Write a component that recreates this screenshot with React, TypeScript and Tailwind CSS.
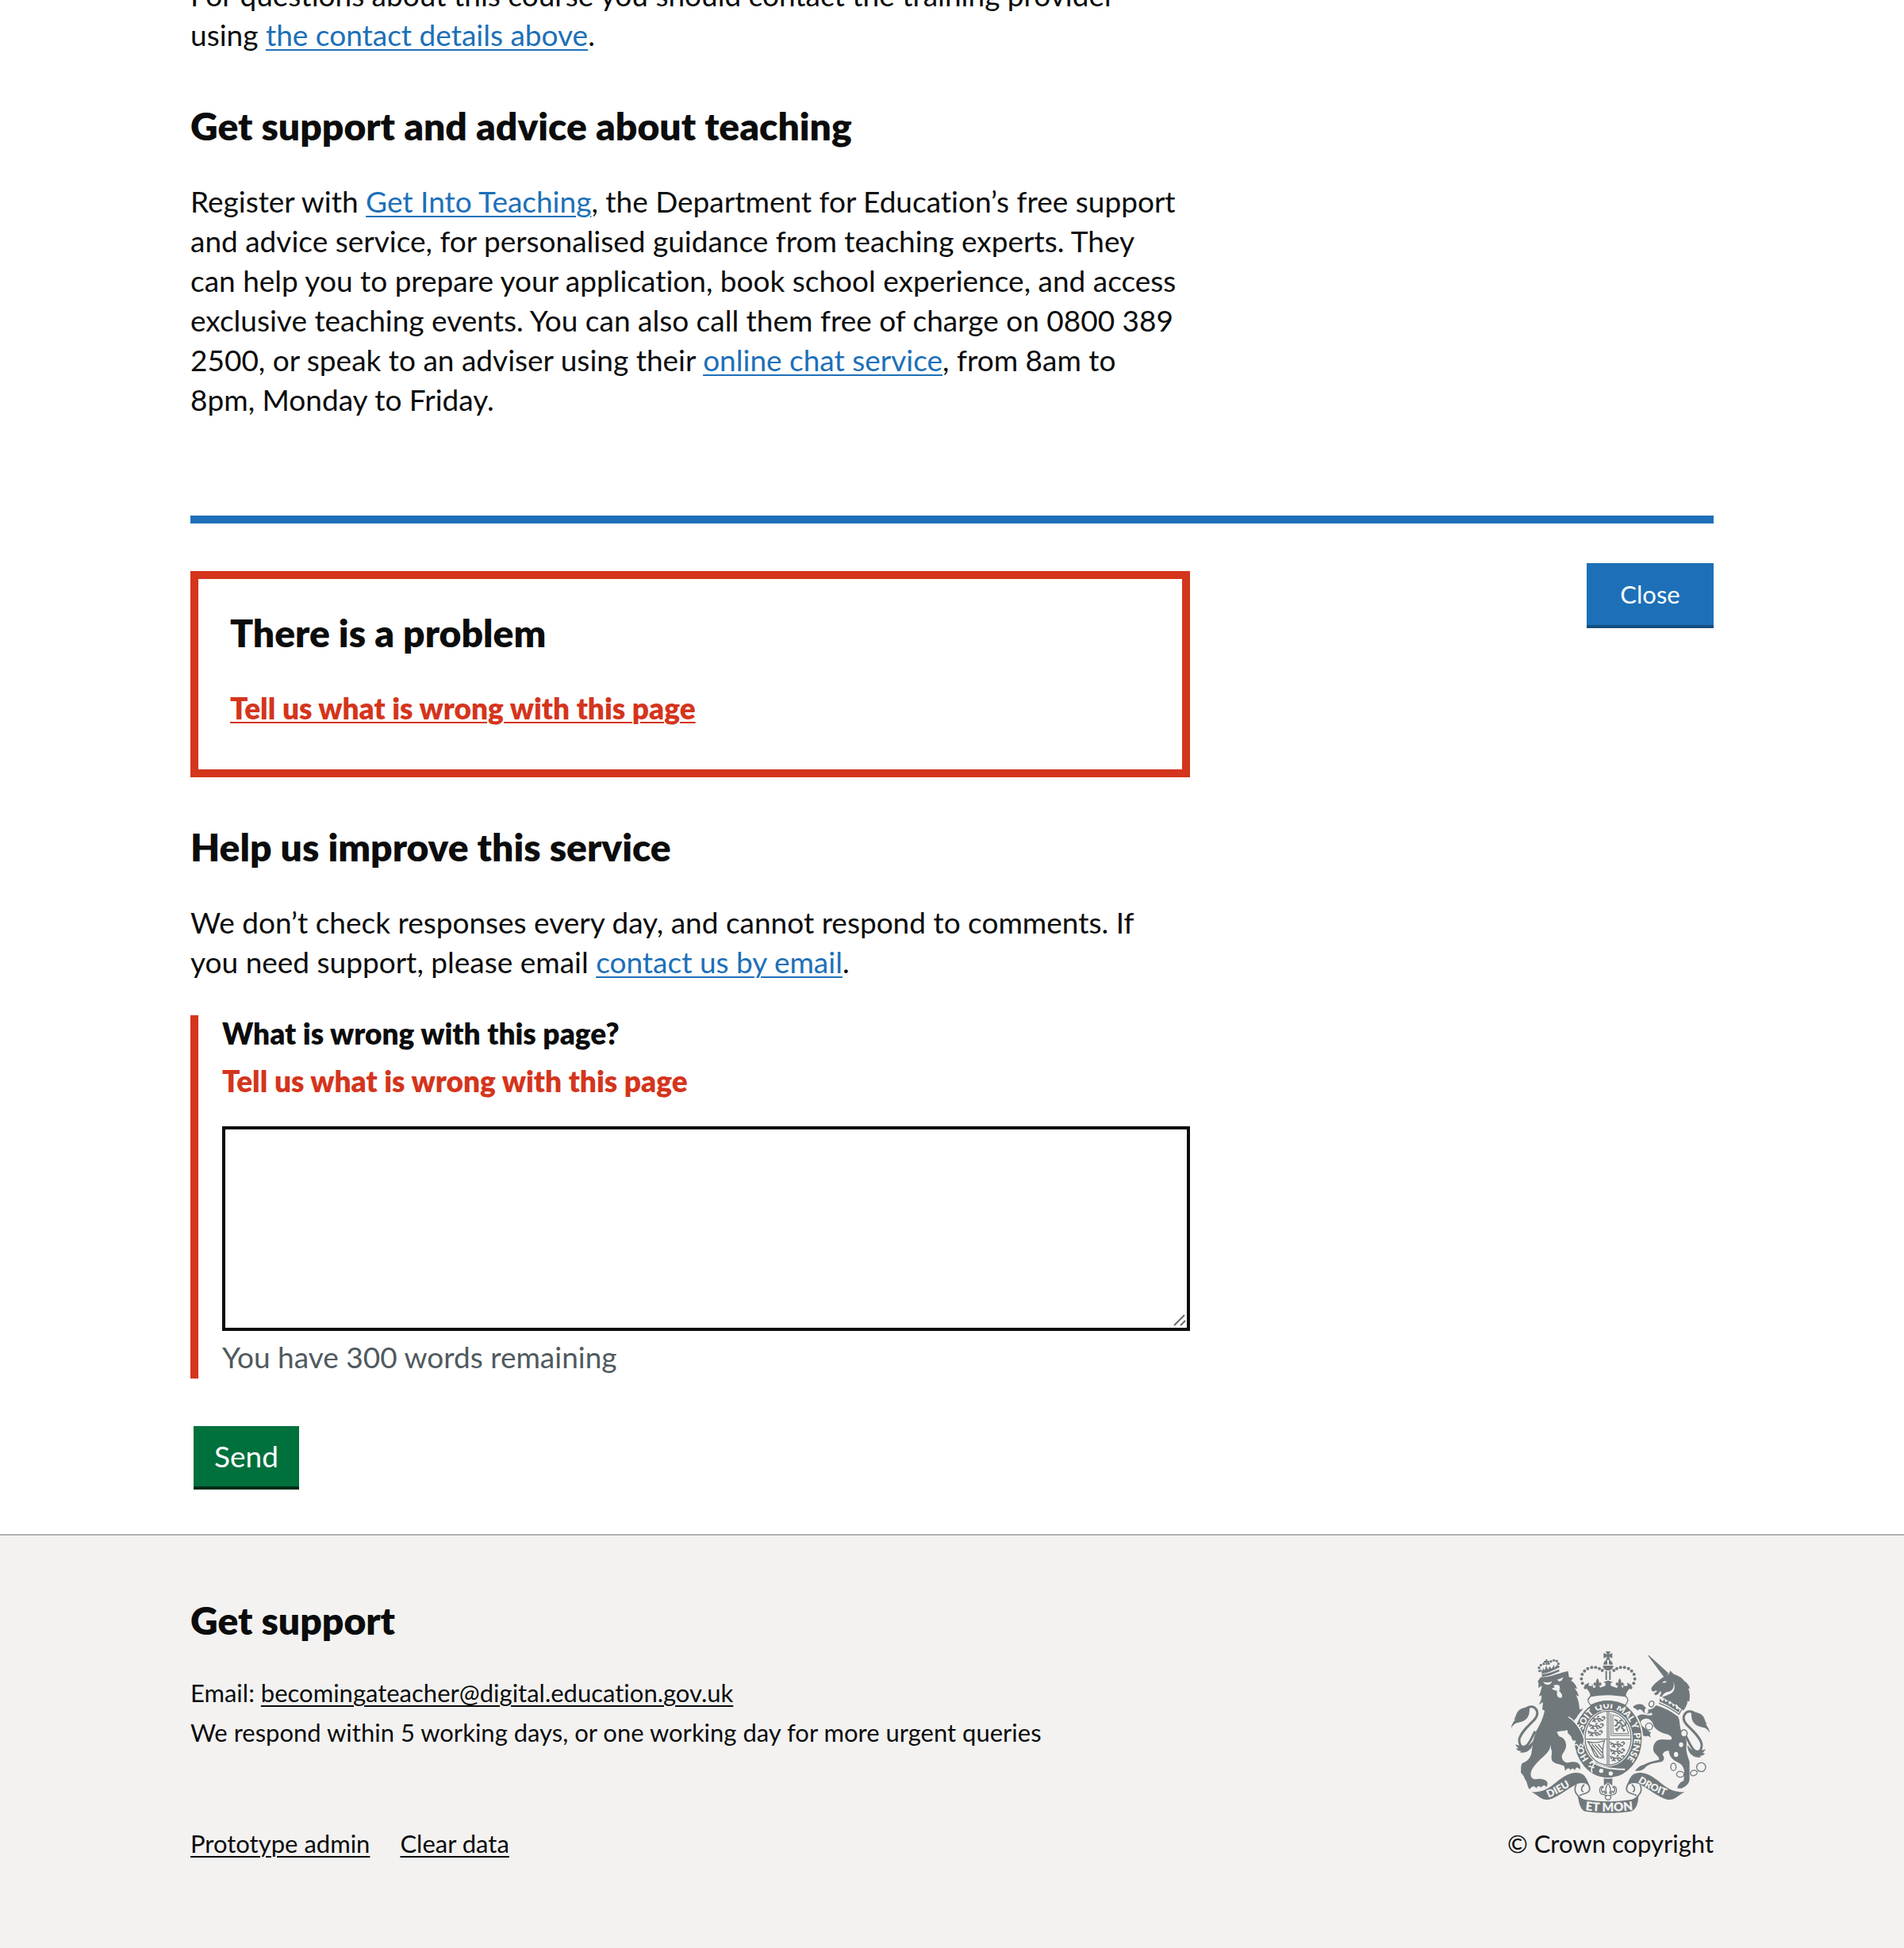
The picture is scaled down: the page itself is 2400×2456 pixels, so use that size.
import type { ReactNode } from "react";

const INK = "#70787b";
const PAPER = "#f3f2f1";

function Link({ href, children }: { href: string; children: ReactNode }) {
  return (
    <a href={href} className="text-[#1d70b8] underline decoration-2 underline-offset-[4px]">
      {children}
    </a>
  );
}

function FooterLink({ href, children }: { href: string; children: ReactNode }) {
  return (
    <a href={href} className="underline decoration-2 underline-offset-[4px]">
      {children}
    </a>
  );
}

function Heading({ children }: { children: ReactNode }) {
  return <h2 className="text-[48px] leading-[60px] font-extrabold">{children}</h2>;
}

function Dots({ points, r }: { points: number[][]; r: number }) {
  return (
    <>
      {points.map(([x, y]) => (
        <circle key={`${x}-${y}`} cx={x} cy={y} r={r} />
      ))}
    </>
  );
}

/* One side of the motto ribbon, with its fold; the other side mirrors it. */
function RibbonSide() {
  return (
    <g>
      <path d="M149 598 C178 600 200 592 222 577 C248 558 272 532 308 526 C336 522 352 534 358 554 L364 574 C352 562 338 562 322 567 C300 577 262 606 232 620 C214 629 196 629 184 621 C172 613 160 604 149 598Z" />
      <path
        d="M354 548 C362 570 374 582 366 594 C358 606 340 604 330 612 M318 568 C308 586 312 600 324 612 C330 620 330 634 336 646 M348 570 C336 580 334 590 344 598"
        fill="none"
        stroke={INK}
        strokeWidth="5"
      />
    </g>
  );
}

function Tail() {
  return (
    <g>
      <path d="M72 356 C73 334 94 322 82 322 C90 316 88 304 98 292 C108 280 128 276 142 280 C140 290 142 306 132 318 C122 332 104 334 92 337 C84 340 78 346 72 356Z" />
      <path
        d="M112 296 C124 280 146 270 160 279 C176 292 172 312 158 326 C136 348 106 374 102 400 C102 424 112 432 128 424 C142 414 148 394 162 368"
        fill="none"
        stroke={INK}
        strokeWidth="9"
      />
      <path d="M87 418 C98 424 112 420 122 426 C136 426 148 414 156 402 C156 424 144 442 124 448 C116 450 110 450 104 448 L110 442 C102 444 94 440 90 434 L100 432 C94 430 90 424 87 418Z" />
    </g>
  );
}

function FleurDeLis({ x, y }: { x: number; y: number }) {
  return (
    <path
      transform={`translate(${x} ${y})`}
      d="M0 -20 C5 -12 8 -6 4 2 C6 -4 14 -6 15 2 C16 8 10 10 7 7 C7 12 10 16 14 22 L-14 22 C-10 16 -7 12 -7 7 C-10 10 -16 8 -15 2 C-14 -6 -6 -4 -4 2 C-8 -6 -5 -12 0 -20Z"
    />
  );
}

function PassantLion({ x, y }: { x: number; y: number }) {
  return (
    <path
      transform={`translate(${x} ${y})`}
      d="M0 6 l6 -6 l6 3 l10 1 l9 -2 l8 3 M4 14 l6 -4 l2 -6 M14 5 l-2 7 l6 3 M26 4 l2 7 l7 3 M34 4 l6 6 l7 -2 M40 -2 l7 -3 l5 4 l-4 6 M2 0 l-4 -5 M22 -2 l8 -6"
      fill="none"
      stroke={INK}
      strokeWidth="5"
    />
  );
}

function Crest() {
  const arch = [[352, 203], [341, 187], [337, 170], [340, 153], [349, 140], [361, 131], [376, 127], [391, 127], [405, 131], [416, 138]];
  return (
    <svg viewBox="72 66 750 612" className="h-[204px] w-[250px]" fill={INK} role="img" aria-label="Royal coat of arms">
      {/* lion */}
      <Tail />
      <path d="M172 179 L184 163 C206 166 232 156 250 151 C264 146 276 142 287 141 L290 163 L306 167 L298 177 C308 182 316 192 321 207 L312 206 C318 214 326 224 327 236 L317 232 C324 246 329 262 330 286 L344 283 C334 296 324 306 318 318 C312 322 304 336 308 348 L330 368 C338 382 346 398 344 408 L340 424 L334 414 L328 428 L321 416 L312 420 L316 406 L308 404 L300 396 L306 388 L294 388 L299 372 L288 378 L283 363 C274 368 258 366 243 371 C250 376 246 386 262 391 C274 398 280 410 279 424 C279 440 264 452 263 464 C264 478 276 490 290 486 C306 482 322 484 328 492 C334 498 334 506 332 514 C326 504 318 504 316 508 L312 517 C308 506 300 508 296 516 C292 506 284 506 276 518 L272 500 C258 492 240 494 226 480 C220 462 230 448 222 434 L219 410 C224 436 206 454 186 470 C168 488 150 506 146 524 C144 540 150 548 162 550 C178 546 200 548 208 560 C210 568 208 576 204 580 C200 570 192 570 184 582 C180 574 172 574 166 584 C160 574 150 574 142 588 C132 580 134 566 128 556 C120 546 122 540 116 534 L108 524 C110 512 106 498 114 488 C132 484 144 468 148 452 C154 420 152 400 168 364 C182 340 192 320 198 290 L189 286 L192 258 L176 268 C184 254 188 244 186 232 L176 236 C184 218 186 206 188 196 L174 204 C176 192 176 186 172 179Z" />
      <g fill={PAPER}>
        <path d="M192 180 Q206 188 226 179 Q220 194 206 192 Q196 190 192 180Z" />
        <path d="M246 171 Q256 174 268 163 Q266 178 254 180 Q248 178 246 171Z" />
        <path d="M224 208 L236 202 L232 194 L246 192 L254 196 L256 206 L248 210 L258 208 L252 216 C264 224 270 240 258 242 C246 242 242 228 246 216 L234 212Z" />
      </g>
      <g>
        <path d="M186 152 Q216 150 252 134 L254 142 Q222 158 190 163Z" />
        <path d="M182 132 L190 140 L192 128 L198 138 L204 120 L211 136 L217 122 L224 132 L234 116 L235 128 L246 116 L250 128 Q218 146 188 150Z" />
        <Dots r={5} points={[[179, 140], [177, 128], [184, 118], [195, 113], [213, 112], [222, 104], [233, 100], [244, 103], [250, 113], [249, 124]]} />
        <path d="M202 96 h6 v6 h7 v6 h-7 v10 h-6 v-10 h-7 v-6 h7Z" />
      </g>

      {/* unicorn */}
      <g transform="translate(894 18) scale(-1 1)">
        <Tail />
      </g>
      <path d="M588 81 L593 82 L668 150 L650 164Z" />
      <path d="M648 163 L668 152 L673 139 L686 152 C704 158 722 168 726 178 C736 184 744 194 748 208 L741 206 C748 220 748 238 745 256 L738 254 C738 268 730 280 722 290 L712 282 L704 276 L698 268 L686 266 L674 256 L662 252 L650 244 L640 238 L632 236 C640 226 640 222 636 216 C630 226 624 232 616 232 L612 226 L624 216 L618 214 L612 218 C604 218 600 212 602 204 C610 192 618 184 632 174Z" />
      <path d="M684 180 C692 202 680 218 662 220 C650 222 646 232 638 240 C652 238 664 230 674 226 C690 218 694 198 684 180Z" fill={PAPER} />
      <path d="M642 184 Q650 176 660 180 Q654 188 642 184Z" fill={PAPER} />
      {/* coronet collar */}
      <path d="M634 236 L722 290 L712 312 L622 264Z" fill={PAPER} />
      <path d="M630 262 Q668 276 706 304 L716 286" fill="none" stroke={INK} strokeWidth="4" />
      <path d="M632 256 L634 244 L644 256 L650 246 L656 258 L666 252 L668 268 L678 262 L684 276 L692 268 L696 284 L708 284 L706 298 Q668 270 632 256Z" />
      <path d="M620 270 Q662 282 702 312 C712 330 706 348 716 370 C730 386 738 404 734 426 C732 446 740 464 746 484 L746 552 C742 572 728 578 716 584 L700 584 C702 570 712 560 724 556 L726 520 C724 496 708 488 694 482 C676 472 668 456 668 442 C656 442 648 446 644 456 C650 466 654 476 640 484 C618 488 596 490 580 504 C572 514 560 520 540 518 C548 506 558 498 574 494 C592 484 614 480 630 476 C634 468 620 458 612 448 C604 430 612 410 626 402 C644 396 660 402 676 400 C684 394 676 386 664 380 C642 376 622 366 610 348 C608 336 602 328 592 322 C580 318 570 322 562 330 C560 342 568 350 582 360 L600 374 L596 380 L600 392 C588 384 586 384 582 388 C570 386 560 376 552 362 C544 346 536 338 538 326 C548 308 560 302 578 306 C590 308 600 310 606 306 L602 298 C590 304 576 304 568 292 C562 284 556 282 550 290 C544 282 536 282 532 276 C540 266 560 262 572 270 C580 278 584 286 594 286 C604 286 612 278 620 270Z" />
      <g fill={PAPER} stroke={INK} strokeWidth="4">
        <ellipse cx="602" cy="265" rx="9" ry="11" transform="rotate(20 602 265)" />
        <ellipse cx="583" cy="291" rx="7" ry="10" stroke="none" />
        <ellipse cx="593" cy="350" rx="13" ry="13" />
        <ellipse cx="725" cy="376" rx="12" ry="13" />
        <ellipse cx="714" cy="419" rx="8" ry="9" stroke="none" />
        <ellipse cx="695" cy="456" rx="8" ry="10" stroke="none" />
        <ellipse cx="685" cy="503" rx="10" ry="14" />
        <ellipse cx="711" cy="531" rx="14" ry="11" />
        <ellipse cx="762" cy="526" rx="13" ry="10" transform="rotate(-20 762 526)" />
        <circle cx="790" cy="504" r="17" />
      </g>

      {/* garter */}
      <ellipse cx="438" cy="397" rx="130" ry="149" fill={INK} stroke={PAPER} strokeWidth="5" />
      <ellipse cx="438" cy="394" rx="93" ry="107" fill={PAPER} />
      <ellipse cx="438" cy="394" rx="87" ry="102" fill={PAPER} stroke={INK} strokeWidth="4" />
      <defs>
        <path id="garter" d="M438 510 A98 114 0 0 1 438 282 A98 114 0 0 1 438 510" />
        <path id="dieu" d="M213 620 Q262 599 320 560" />
        <path id="droit" d="M550 560 Q604 596 676 620" />
        <path id="et-mon" d="M352 667 Q438 677 530 666" />
        <clipPath id="shield">
          <ellipse cx="438" cy="394" rx="86" ry="101" />
        </clipPath>
      </defs>
      <g fill={PAPER} className="font-['Lato',sans-serif] text-[34px] font-extrabold">
        <text><textPath href="#garter" startOffset="84">HO</textPath></text>
        <text><textPath href="#garter" startOffset="198">SOIT</textPath></text>
        <text><textPath href="#garter" startOffset="286">QUI</textPath></text>
        <text><textPath href="#garter" startOffset="362">MAL</textPath></text>
        <text><textPath href="#garter" startOffset="442">Y</textPath></text>
        <text><textPath href="#garter" startOffset="478">PENSE</textPath></text>
      </g>
      <g clipPath="url(#shield)">
        <PassantLion x={374} y={318} />
        <PassantLion x={368} y={345} />
        <PassantLion x={364} y={371} />
        <PassantLion x={448} y={414} />
        <PassantLion x={448} y={440} />
        <PassantLion x={448} y={466} />
        <path d="M449 300 V384 H520 M456 306 V377 H516 M456 306 Q500 310 516 377" fill="none" stroke={INK} strokeWidth="3" />
        <path d="M462 324 l10 4 l2 8 l10 0 l8 10 l-2 10 l10 8 l-6 4 M474 336 l-4 10 l-8 2 M484 346 l-8 12 l-8 2 l6 8 M492 350 l12 -6 l2 -12 M480 330 l12 -4" fill="none" stroke={INK} strokeWidth="6" />
        <path d="M362 408 Q392 416 424 404 Q414 436 420 468 Q392 472 384 452 Q376 428 362 408Z M376 416 L416 464 M388 418 L416 450 M400 416 L416 436 M374 424 L402 466" fill="none" stroke={INK} strokeWidth="4" />
        <path d="M352 398 H524" stroke={INK} strokeWidth="4" />
        <path d="M438 292 V498" stroke={INK} strokeWidth="10" />
        <path d="M438 292 V498" stroke={PAPER} strokeWidth="3" />
      </g>
      {/* buckle and strap */}
      <path d="M368 490 L384 480 L388 490 Q436 514 502 512" fill="none" stroke={PAPER} strokeWidth="6" />
      <path d="M376 482 Q390 490 380 500 Q372 512 378 524 M364 500 L386 506" fill="none" stroke={PAPER} strokeWidth="5" />
      <g fill={PAPER}>
        <circle cx="412" cy="518" r="8" />
        <circle cx="448" cy="528" r="8" />
      </g>
      {/* lion foreleg laid over the garter */}
      <path
        d="M288 314 C318 330 344 376 348 402 L342 426 L334 416 L328 430 L320 418 L308 422 L314 406 L302 404 L296 388 L286 378"
        stroke={PAPER}
        strokeWidth="4"
      />

      {/* crown */}
      <path d="M364 240 Q438 218 510 240 L520 206 Q438 190 354 206Z" fill={PAPER} />
      <path d="M370 238 Q438 222 506 238 Q504 226 512 216 L528 194 L510 184 L512 196 L500 198 L498 188 L494 204 L470 204 L448 196 L448 186 L456 182 L438 176 L420 182 L428 186 L428 196 L406 204 L382 204 L378 188 L376 198 L364 196 L366 184 L348 194 L364 216 Q372 226 370 238Z" />
      <FleurDeLis x={398} y={187} />
      <FleurDeLis x={482} y={187} />
      <path d="M372 236 Q438 224 504 236 Q518 246 510 258 L504 270 Q438 240 372 270 L364 258 Q358 246 372 236Z" fill={PAPER} stroke={INK} strokeWidth="4" />
      <path d="M374 268 Q438 236 502 268 L496 278 Q438 252 380 278Z" />
      <Dots r={6} points={arch} />
      <g transform="translate(876 0) scale(-1 1)">
        <Dots r={6} points={arch} />
      </g>
      <path d="M428 140 h6 v34 h-6Z M442 140 h6 v34 h-6Z" />
      <path d="M418 120 H458 Q456 138 438 139 Q420 138 418 120Z" />
      <path d="M420 116 Q422 100 435 99 V116Z M456 116 Q454 100 441 99 V116Z" />
      <path d="M429 66 H447 L441 78 L454 72 V92 L441 86 L447 98 H429 L435 86 L421 92 V72 L435 78Z" />

      {/* pendant fleur-de-lis */}
      <path d="M422 546 Q438 550 454 546 V574 L438 562 L422 574Z" />
      <path
        d="M438 566 C448 578 450 588 444 602 C450 606 452 602 450 598 C452 592 456 596 458 600 C466 594 464 580 456 580 C462 570 474 584 468 600 C462 612 448 606 446 612 C452 618 446 628 438 628 C430 628 424 618 430 612 C428 606 414 612 408 600 C402 584 414 570 420 580 C412 580 410 594 418 600 C420 596 424 592 426 598 C424 602 426 606 432 602 C426 588 428 578 438 566Z M426 611 H450"
        fill={PAPER}
        stroke={INK}
        strokeWidth="4"
      />

      {/* ribbon */}
      <RibbonSide />
      <g transform="translate(876 0) scale(-1 1)">
        <RibbonSide />
      </g>
      <path d="M324 608 Q334 624 356 628 Q438 640 520 628 Q542 624 552 608 C554 634 546 664 526 671 Q438 684 350 671 C332 664 326 634 324 608Z" />
      <g fill={PAPER} className="font-['Lato',sans-serif] font-extrabold">
        <text className="text-[39px]"><textPath href="#dieu">DIEU</textPath></text>
        <text className="text-[37px]"><textPath href="#droit">DROIT</textPath></text>
        <text className="text-[46px]"><textPath href="#et-mon">ET MON</textPath></text>
      </g>
    </svg>
  );
}

export default function App() {
  return (
    <div className="flex min-h-screen flex-col overflow-hidden bg-white font-['Lato',sans-serif] text-[37px] leading-[50px] text-[#0b0c0c] [font-variant-ligatures:none]">
      <main className="mx-auto w-4/5">
        <div className="w-[1260px] max-w-full">
          <p className="-mt-[31px] pr-2">
            For questions about this course you should contact the training provider using{" "}
            <Link href="#contact">the contact details above</Link>.
          </p>
          <div className="mt-[60px]">
            <Heading>Get support and advice about teaching</Heading>
          </div>
          <p className="mt-10 pr-2">
            Register with <Link href="#get-into-teaching">Get Into Teaching</Link>, the Department for Education’s free
            support and advice service, for personalised guidance from teaching experts. They can help you to prepare
            your application, book school experience, and access exclusive teaching events. You can also call them free
            of charge on 0800 389 2500, or speak to an adviser using their{" "}
            <Link href="#chat">online chat service</Link>, from 8am to 8pm, Monday to Friday.
          </p>
        </div>

        <section className="mt-[121px] flex items-start justify-between border-t-[10px] border-[#1d70b8]">
          <div className="w-[1260px] pt-[60px] pb-14">
            <div role="alert" className="border-[10px] border-[#d4351c] px-10 pt-[38px] pb-[52px]">
              <Heading>There is a problem</Heading>
              <p className="mt-10 font-extrabold text-[#d4351c]">
                <a href="#problem" className="underline decoration-2 underline-offset-[3px]">
                  Tell us what is wrong with this page
                </a>
              </p>
            </div>
            <div className="mt-[58px]">
              <Heading>Help us improve this service</Heading>
            </div>
            <p className="mt-10 pr-2">
              We don’t check responses every day, and cannot respond to comments. If you need support, please email{" "}
              <Link href="#email">contact us by email</Link>.
            </p>
            <form>
              <div className="mt-[42px] flex flex-col border-l-[10px] border-[#d4351c] pb-[2px] pl-[30px]">
                <label htmlFor="problem" className="leading-[46px] font-extrabold">
                  What is wrong with this page?
                </label>
                <p id="problem-error" className="mt-3 font-extrabold text-[#d4351c]">
                  Tell us what is wrong with this page
                </p>
                <div className="relative mt-8">
                  <textarea
                    id="problem"
                    aria-describedby="problem-error problem-hint"
                    className="block h-[258px] w-full resize-none border-4 border-[#0b0c0c] bg-white p-2"
                  />
                  <svg
                    viewBox="0 0 16 16"
                    className="pointer-events-none absolute right-[5px] bottom-[5px] h-4 w-4"
                    fill="none"
                    stroke="#6b6b6b"
                    strokeWidth="2"
                    aria-hidden="true"
                  >
                    <path d="M1 14 L14 1 M9 14 L15 8" />
                  </svg>
                </div>
                <p id="problem-hint" className="mt-2 text-[#505a5f]">
                  You have 300 words remaining
                </p>
              </div>
              <button
                type="button"
                className="mt-[60px] ml-1 block h-20 w-[133px] border-b-4 border-[#002d18] bg-[#00703c] text-white"
              >
                Send
              </button>
            </form>
          </div>
          <button
            type="button"
            className="mt-[50px] h-[82px] w-[160px] border-b-4 border-[#144e81] bg-[#1d70b8] text-[31px] text-white"
          >
            Close
          </button>
        </section>
      </main>

      <footer className="grow border-t-2 border-[#b1b4b6] bg-[#f3f2f1] text-[31px]">
        <div className="mx-auto flex w-4/5 items-end justify-between pt-[77px] pb-[107px]">
          <div>
            <Heading>Get support</Heading>
            <p className="mt-9">
              Email: <FooterLink href="#support">becomingateacher@digital.education.gov.uk</FooterLink>
            </p>
            <p>We respond within 5 working days, or one working day for more urgent queries</p>
            <nav className="mt-[90px] flex gap-[38px]">
              <FooterLink href="#admin">Prototype admin</FooterLink>
              <FooterLink href="#clear">Clear data</FooterLink>
            </nav>
          </div>
          <div className="flex flex-col items-center gap-[13px]">
            <Crest />
            <a href="#crown">© Crown copyright</a>
          </div>
        </div>
      </footer>
    </div>
  );
}
